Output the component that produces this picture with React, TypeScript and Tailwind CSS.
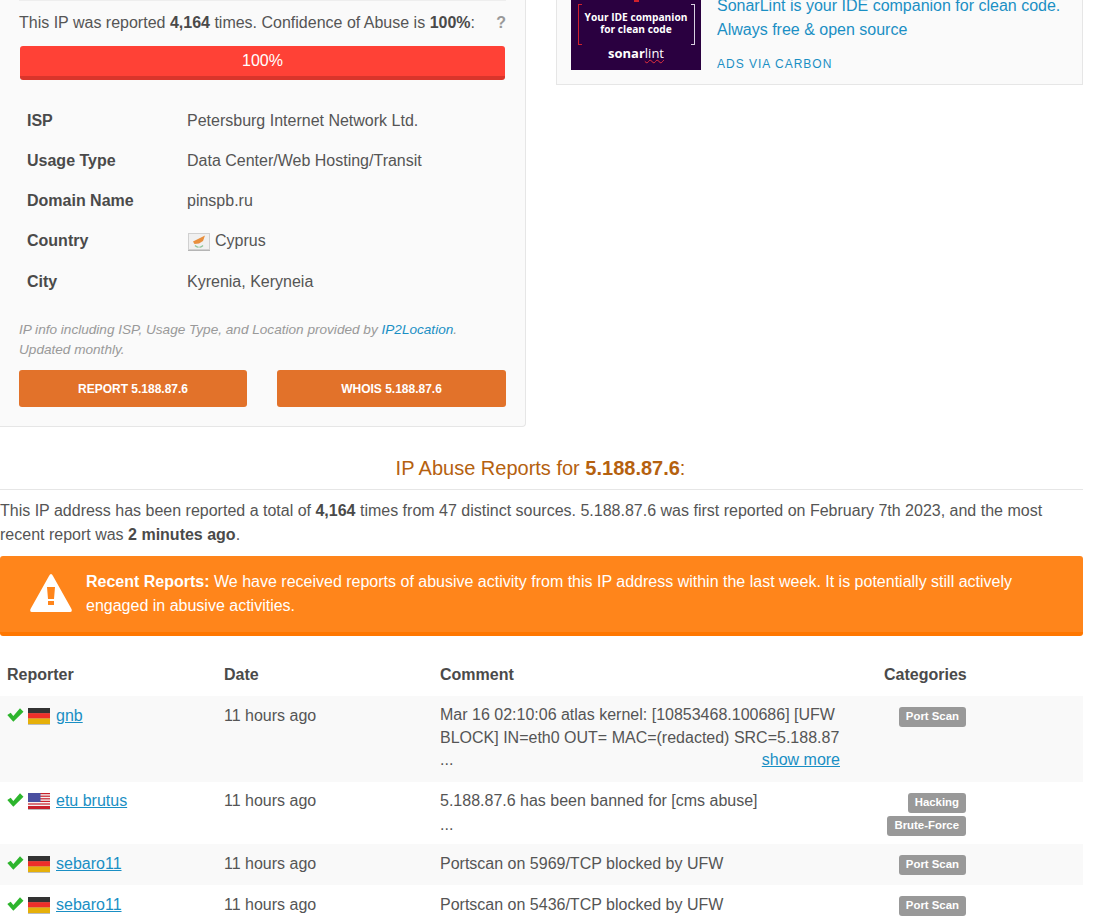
const Check = () => (
  <svg width="17" height="14" viewBox="0 0 17 14" className="-mt-[2px] shrink-0">
    <path d="M0.3 7 L3.7 4.7 L6.3 8 L13 0.3 L16.5 3.7 L6.3 13.8 Z" fill="#2db52d" />
  </svg>
);

const Warning = () => (
  <svg width="42" height="38" viewBox="0 0 42 38" className="mt-[18px] ml-[30px] shrink-0">
    <path
      fillRule="evenodd"
      fill="#fff"
      d="M21 0 Q22 0 23 2 L41.5 35 Q42.5 38 40 38 L2 38 Q-0.5 38 0.5 35 L19 2 Q20 0 21 0 Z M17 13 L25 13 L24 25 L18 25 Z M18 27 L24 27 L24 31 L18 31 Z"
    />
  </svg>
);

// flags are small shaded rectangles like the sprite on the page
const FlagDE = () => (
  <svg width="24" height="18" viewBox="0 0 24 18" className="shrink-0">
    <rect x="1" y="2" width="22" height="16" fill="#bdbdbd" />
    <rect x="1" y="1" width="22" height="5.4" fill="#333" />
    <rect x="1" y="6.2" width="22" height="5.3" fill="#ee2f2a" />
    <rect x="1" y="11.5" width="22" height="5.5" fill="#e6b00a" />
  </svg>
);

const FlagUS = () => (
  <svg width="24" height="18" viewBox="0 0 24 18" className="shrink-0">
    <rect x="1" y="2" width="22" height="16" fill="#bdbdbd" />
    <rect x="1" y="1" width="22" height="16" fill="#f4f4f4" />
    <rect x="1" y="1" width="22" height="1.2" fill="#c8202c" />
    <rect x="1" y="3.6" width="22" height="1.2" fill="#c8202c" />
    <rect x="1" y="6.2" width="22" height="1.2" fill="#c8202c" />
    <rect x="1" y="8.8" width="22" height="1.2" fill="#c8202c" />
    <rect x="1" y="11.4" width="22" height="1.2" fill="#c8202c" />
    <rect x="1" y="14" width="22" height="3" fill="#c8202c" />
    <rect x="1" y="1" width="12.5" height="9" fill="#4a4fa0" />
  </svg>
);

const FlagCY = () => (
  <svg width="24" height="19" viewBox="0 0 24 19" className="shrink-0">
    <rect x="1" y="2" width="22" height="17" fill="#b5b5b5" />
    <rect x="1.5" y="1.5" width="21" height="16" fill="#f0f0f0" stroke="#d0d0d0" />
    <path d="M6 9.5 L11 7 L18 3.5 L16 9 L12 11.5 L7.5 12 Z" fill="#e88f3e" />
    <path d="M8 13.5 Q10 15.5 11.5 15 M16 13.5 Q14 15.5 12.5 15" stroke="#8fc39a" strokeWidth="1.4" fill="none" />
  </svg>
);

const Badge = ({ label }: { label: string }) => (
  <span className="inline-block h-5 rounded-[3px] bg-[#999] px-[7px] text-[11.4px] leading-[18px] font-bold text-white">
    {label}
  </span>
);

const Info = ({ label, children }: { label: string; children: React.ReactNode }) => (
  <div className="flex h-10 items-center last:mt-px">
    <div className="w-[168px] pl-2 font-bold text-[#4a4a4a]">{label}</div>
    <div className="flex items-center gap-1">{children}</div>
  </div>
);

interface Report {
  flag: React.ReactNode;
  name: string;
  comment: React.ReactNode;
  cats: string[];
  rowClass: string;
  badgeClass: string;
}

const reports: Report[] = [
  {
    flag: <FlagDE />,
    name: 'gnb',
    comment: (
      <div className="leading-[22.5px]">
        Mar 16 02:10:06 atlas kernel: [10853468.100686] [UFW BLOCK] IN=eth0 OUT= MAC=(redacted) SRC=5.188.87
        <div className="flex justify-between">
          <span>...</span>
          <a className="text-[#1a8fc4] underline">show more</a>
        </div>
      </div>
    ),
    cats: ['Port Scan'],
    rowClass: 'h-[86px] pt-2 bg-[#f9f9f9]',
    badgeClass: 'pt-[3px]',
  },
  {
    flag: <FlagUS />,
    name: 'etu brutus',
    comment: (
      <>
        5.188.87.6 has been banned for [cms abuse]
        <div>...</div>
      </>
    ),
    cats: ['Hacking', 'Brute-Force'],
    rowClass: 'h-[62px] pt-[7px]',
    badgeClass: 'pt-1',
  },
  {
    flag: <FlagDE />,
    name: 'sebaro11',
    comment: 'Portscan on 5969/TCP blocked by UFW',
    cats: ['Port Scan'],
    rowClass: 'h-[41px] pt-2 bg-[#f9f9f9]',
    badgeClass: 'pt-[3px]',
  },
  {
    flag: <FlagDE />,
    name: 'sebaro11',
    comment: 'Portscan on 5436/TCP blocked by UFW',
    cats: ['Port Scan'],
    rowClass: 'h-[41px] pt-2',
    badgeClass: 'pt-[3px]',
  },
];

export default function App() {
  return (
    <div className="h-[922px] w-[1095px] overflow-hidden bg-white font-['Liberation_Sans',sans-serif] text-base text-[#555]">
      {/* top row: ip card + carbon ad */}
      <div className="flex items-start gap-[30px]">
        <div className="h-[427px] w-[526px] rounded-br-[4px] border-r border-b border-[#e6e6e6] bg-[#fafafa] px-[19px]">
          <div className="h-px w-full bg-[#eee]" />
          <div className="mt-[10px] flex h-[23px] justify-between leading-[23px]">
            <div>
              This IP was reported <b className="text-[#4a4a4a]">4,164</b> times. Confidence of Abuse is{' '}
              <b className="text-[#4a4a4a]">100%</b>:
            </div>
            <b className="text-[#999]">?</b>
          </div>
          <div className="mt-3 ml-px h-[34px] w-[485px] rounded-[3px] border-b-4 border-[#d9352b] bg-[#ff4136] text-center leading-[29px] text-white">
            100%
          </div>
          <div className="mt-[21px]">
            <Info label="ISP">Petersburg Internet Network Ltd.</Info>
            <Info label="Usage Type">Data Center/Web Hosting/Transit</Info>
            <Info label="Domain Name">pinspb.ru</Info>
            <Info label="Country">
              <FlagCY />
              <span>Cyprus</span>
            </Info>
            <Info label="City">Kyrenia, Keryneia</Info>
          </div>
          <p className="mt-[18px] text-[13.6px] leading-5 text-[#999] italic">
            IP info including ISP, Usage Type, and Location provided by <a className="text-[#1a8fc4]">IP2Location</a>.
            <br />
            Updated monthly.
          </p>
          <div className="mt-[10px] flex justify-between">
            <div className="flex h-[37px] w-[228px] items-center justify-center rounded-[3px] bg-[#e2722a] text-xs font-bold text-white">
              REPORT 5.188.87.6
            </div>
            <div className="flex h-[37px] w-[229px] items-center justify-center rounded-[3px] bg-[#e2722a] text-xs font-bold text-white">
              WHOIS 5.188.87.6
            </div>
          </div>
        </div>

        <div className="flex h-[85px] w-[527px] border-r border-b border-l border-[#e6e6e6] bg-[#fafafa] pl-[14px]">
          <div className="flex h-[70px] w-[130px] shrink-0 flex-col items-center bg-[#2a0040] text-white">
            <div className="h-[2px] w-[5px] bg-[#d0202c]" />
            <div className="mt-[2px] flex h-[41px] w-[117px]">
              <div className="w-[4px] border-y border-l border-[#d0202c]" />
              <div className="flex flex-1 flex-col justify-center pb-1 text-center font-['Open_Sans',sans-serif] text-[10.2px] leading-[12px] font-bold">
                <span className="whitespace-nowrap">Your IDE companion</span>
                <span>for clean code</span>
              </div>
              <div className="w-[4px] border-y border-r border-[#d8d0e0]" />
            </div>
            <div className="font-['Open_Sans',sans-serif] text-[13px] leading-[16px]">
              <b>sonar</b>
              <span className="underline decoration-[#e8303c] decoration-wavy decoration-1">lint</span>
            </div>
          </div>
          <div className="pl-4">
            <div className="-mt-[6px] leading-6 text-[#1a8fc4]">
              SonarLint is your IDE companion for clean code.
              <br />
              Always free &amp; open source
            </div>
            <div className="mt-[15px] text-xs leading-[14px] tracking-[1px] text-[#1a8fc4]">ADS VIA CARBON</div>
          </div>
        </div>
      </div>

      {/* reports section */}
      <div className="w-[1083px]">
        <h2 className="mt-[29px] border-b border-[#e6e6e6] pr-[2px] pb-[9px] text-center text-xl leading-6 text-[#b5610f]">
          IP Abuse Reports for <b>5.188.87.6</b>:
        </h2>
        <p className="mt-[9px] leading-6">
          This IP address has been reported a total of <b className="text-[#4a4a4a]">4,164</b> times from 47 distinct
          sources. 5.188.87.6 was first reported on February 7th 2023, and the most recent report was{' '}
          <b className="text-[#4a4a4a]">2 minutes ago</b>.
        </p>
        <div className="mt-[9px] flex h-20 items-start rounded-[3px] border-b-4 border-[#ff7700] bg-[#ff851b] text-white">
          <Warning />
          <div className="mt-[14px] mr-[60px] ml-[14px] leading-6">
            <b>Recent Reports:</b> We have received reports of abusive activity from this IP address within the last
            week. It is potentially still actively engaged in abusive activities.
          </div>
        </div>

        <div className="mt-[27px] grid h-[33px] grid-cols-[217px_216px_444px_96px] leading-6 font-bold text-[#4a4a4a]">
          <div className="pl-[7px]">Reporter</div>
          <div className="pl-[7px]">Date</div>
          <div className="pl-[7px]">Comment</div>
          <div className="pl-[7px]">Categories</div>
        </div>

        {reports.map((r, i) => (
          <div key={i} className={`grid grid-cols-[217px_216px_444px_96px] leading-6 ${r.rowClass}`}>
            <div className="flex h-6 items-center pl-[7px]">
              <Check />
              <span className="ml-[3px] flex">{r.flag}</span>
              <a className="ml-[5px] text-[#1a8fc4] underline">{r.name}</a>
            </div>
            <div className="pl-[7px]">11 hours ago</div>
            <div className="w-[407px] pl-[7px]">{r.comment}</div>
            <div className={`flex flex-col items-end gap-[3px] pr-[7px] ${r.badgeClass}`}>
              {r.cats.map((c) => (
                <Badge key={c} label={c} />
              ))}
            </div>
          </div>
        ))}
      </div>
    </div>
  );
}
